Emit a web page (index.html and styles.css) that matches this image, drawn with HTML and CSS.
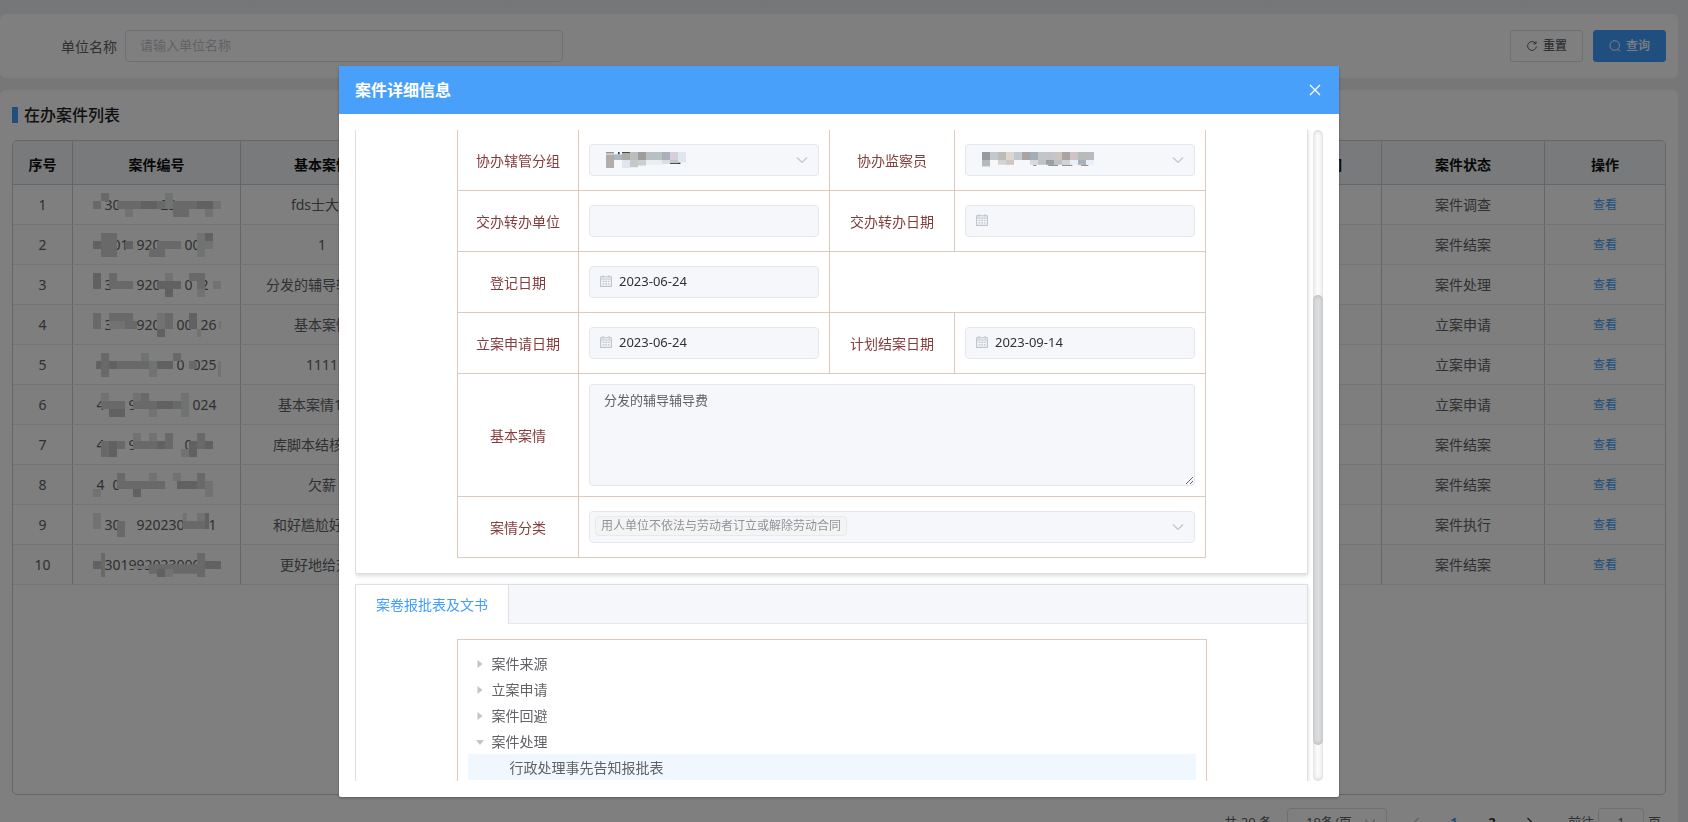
FILE: index.html
```html
<!DOCTYPE html>
<html lang="zh-CN">
<head>
<meta charset="utf-8">
<title>在办案件列表</title>
<link rel="stylesheet" href="styles.css">
</head>
<body>
<svg class="defs" aria-hidden="true">
  <symbol id="chevron" viewBox="0 0 12 12"><path d="M1 3.5l5 5 5-5" fill="none" stroke="currentColor" stroke-width="1.2"/></symbol>
  <symbol id="calendar" viewBox="0 0 12 12"><path d="M.6 1.8h10.8v9.6H.6z M.6 4h10.8" fill="none" stroke="currentColor" stroke-width="1.1"/><path d="M3 0v2.6M9 0v2.6" stroke="currentColor"/><path d="M2.6 6.4h7M2.6 8.9h7" fill="none" stroke="currentColor" stroke-width="1.2" stroke-dasharray="1.8 .8"/></symbol>
  <symbol id="caret" viewBox="0 0 12 12"><path d="M3.5 2v8l5-4z" fill="currentColor"/></symbol>
  <symbol id="caret-open" viewBox="0 0 12 12"><path d="M2 4h8l-4 5z" fill="currentColor"/></symbol>
</svg>

<main class="page">
  <form class="card search">
    <label class="search-label" for="unit">单位名称</label>
    <input class="search-input" id="unit" type="text" placeholder="请输入单位名称">
    <div class="search-actions">
      <button class="btn" type="reset"><svg viewBox="0 0 12 12" class="icon"><path d="M9.6 3.4A4.4 4.4 0 1 0 10.4 6.4M10 1.2v2.6H7.4" fill="none" stroke="currentColor"/></svg>重置</button>
      <button class="btn primary" type="button"><svg viewBox="0 0 12 12" class="icon"><circle cx="5.7" cy="5.5" r="4.8" fill="none" stroke="currentColor"/><path d="M8.9 9.1l2.3 2.3" stroke="currentColor"/></svg>查询</button>
    </div>
  </form>

  <section class="card list">
    <h2 class="list-title">在办案件列表</h2>
    <div class="table-box">
      <table class="cases">
        <colgroup><col class="c-no"><col class="c-code"><col><col><col><col><col><col><col><col><col class="c-op"></colgroup>
        <thead><tr><th>序号</th><th>案件编号</th><th>基本案情</th><th></th><th></th><th></th><th></th><th></th><th>立案申请时间</th><th>案件状态</th><th>操作</th></tr></thead>
        <tbody>
          <tr><td>1</td><td><span class="code">&#8199;30&#8199;&#8199;&#8199;&#8199;&#8199;23&#8199;&#8199;&#8199;&#8199;&#8199;<svg class="mosaic" viewBox="0 0 16 3"><path class="a" d="M0 1h1v1h-1zM3 1h3v1h-3zM8 1h5v1h-5zM10 2h2v1h-2zM1 0h1v1h-1z"/><path class="b" d="M6 1h2v1h-2zM13 1h2v1h-2z"/><path class="c" d="M9 0h1v2h-1zM4 2h1v1h-1zM14 2h1v1h-1zM15 1h1v1h-1z"/></svg></span></td><td>fds士大夫</td><td></td><td></td><td></td><td></td><td></td><td></td><td>案件调查</td><td><a href="#">查看</a></td></tr>
          <tr><td>2</td><td><span class="code">&#8199;&#8199;01&#8199;920&#8199;&#8199;&#8199;00&#8199;&#8199;<svg class="mosaic" viewBox="0 0 16 3"><path class="a" d="M1 0h2v3h-2zM7 2h2v1h-2zM8 1h3v1h-3z"/><path class="b" d="M0 1h1v1h-1zM4 1h1v1h-1zM14 0h1v1h-1z"/><path class="c" d="M13 0h1v3h-1zM14 1h1v1h-1z"/></svg></span></td><td>1</td><td></td><td></td><td></td><td></td><td></td><td></td><td>案件结案</td><td><a href="#">查看</a></td></tr>
          <tr><td>3</td><td><span class="code">&#8199;3&#8199;&#8199;&#8199;920&#8199;&#8199;&#8199;0&#8199;2&#8199;<svg class="mosaic" viewBox="0 0 16 3"><path class="a" d="M2 0h1v2h-1zM3 1h2v1h-2zM12 0h2v1h-2zM13 1h1v1h-1z"/><path class="b" d="M0 0h1v2h-1zM8 1h3v1h-3zM9 2h1v1h-1z"/><path class="c" d="M13 2h1v1h-1zM15 1h1v1h-1zM9 0h1v1h-1z"/></svg></span></td><td>分发的辅导辅导费</td><td></td><td></td><td></td><td></td><td></td><td></td><td>案件处理</td><td><a href="#">查看</a></td></tr>
          <tr><td>4</td><td><span class="code">&#8199;3&#8199;&#8199;&#8199;920&#8199;&#8199;00&#8199;26<svg class="mosaic" viewBox="0 0 16 3"><path class="a" d="M0 0h1v2h-1zM2 0h3v1h-3zM4 1h1.5v1h-1.5zM9 0h1v2h-1z"/><path class="b" d="M8 2h1v1h-1zM12 0h1v2h-1z"/><path class="c" d="M2 1h2v1h-2zM8 0h1v2h-1zM13 2h.5v1h-.5zM15.7 1h.3v1h-.3z"/></svg></span></td><td>基本案情</td><td></td><td></td><td></td><td></td><td></td><td></td><td>立案申请</td><td><a href="#">查看</a></td></tr>
          <tr><td>5</td><td><span class="code">4&#8199;&#8199;&#8199;&#8199;&#8199;&#8199;&#8199;&#8199;&#8199;0&#8199;025<svg class="mosaic" viewBox="0 0 16 3"><path class="a" d="M3 1h4v1h-4zM1 0h1v3h-1zM10 0h1v1h-1zM12 1h1v1h-1z"/><path class="b" d="M.4 1h.6v1h-.6zM2 1h1v1h-1zM8 1h2v1h-2z"/><path class="c" d="M7 1h1v2h-1zM6 0h1v1h-1zM15.6 1h.4v2h-.4z"/></svg></span></td><td>1111</td><td></td><td></td><td></td><td></td><td></td><td></td><td>立案申请</td><td><a href="#">查看</a></td></tr>
          <tr><td>6</td><td><span class="code">4&#8199;&#8199;&#8199;9&#8199;&#8199;&#8199;&#8199;&#8199;&#8199;&#8199;024<svg class="mosaic" viewBox="0 0 16 3"><path class="a" d="M1 1h3v1h-3zM5 1h7v1h-7zM6 0h1v1h-1z"/><path class="b" d="M2 2h2v1h-2zM8 1h2v1h-2z"/><path class="c" d="M1 0h1v1h-1zM5 0h1v1h-1zM7 2h1v1h-1zM11 0h1v3h-1z"/></svg></span></td><td>基本案情1111</td><td></td><td></td><td></td><td></td><td></td><td></td><td>立案申请</td><td><a href="#">查看</a></td></tr>
          <tr><td>7</td><td><span class="code">4&#8199;&#8199;&#8199;9&#8199;&#8199;&#8199;&#8199;&#8199;&#8199;0&#8199;&#8199;&#8199;<svg class="mosaic" viewBox="0 0 16 3"><path class="a" d="M1 1h1v2h-1zM3 1h1v1h-1zM5 1h4v1h-4zM9 0h1v2h-1zM13 0h1v2h-1z"/><path class="b" d="M2 1h1v2h-1zM12 1h1v2h-1zM8 1h1v1h-1zM14 1h1v1h-1z"/><path class="c" d="M5 0h1v1h-1zM7 0h1v1h-1zM11 2h1v1h-1z"/></svg></span></td><td>库脚本结核杆菌</td><td></td><td></td><td></td><td></td><td></td><td></td><td>案件结案</td><td><a href="#">查看</a></td></tr>
          <tr><td>8</td><td><span class="code">4&#8199;0&#8199;&#8199;&#8199;&#8199;&#8199;&#8199;&#8199;&#8199;&#8199;&#8199;&#8199;&#8199;<svg class="mosaic" viewBox="0 0 16 3"><path class="a" d="M3 0h1v2h-1zM4 1h2v1h-2zM6 1h3v1h-3zM13 0h1v2h-1z"/><path class="b" d="M5 2h1v1h-1zM10.5 1h2.5v1h-2.5z"/><path class="c" d="M0 2h1v1h-1zM7 0h1v1h-1zM10 0h1v1h-1zM14 1h1v2h-1z"/></svg></span></td><td>欠薪</td><td></td><td></td><td></td><td></td><td></td><td></td><td>案件结案</td><td><a href="#">查看</a></td></tr>
          <tr><td>9</td><td><span class="code">&#8199;30&#8199;&#8199;920230&#8199;&#8199;&#8199;1<svg class="mosaic" viewBox="0 0 16 3"><path class="a" d="M11.2 1h2.8v1h-2.8zM3 1h1v2h-1z"/><path class="b" d="M14 0h.5v2h-.5z"/><path class="c" d="M0 0h1v2h-1zM13 0h1v1h-1zM11.2 0h.5v1h-.5z"/></svg></span></td><td>和好尴尬好尴尬</td><td></td><td></td><td></td><td></td><td></td><td></td><td>案件执行</td><td><a href="#">查看</a></td></tr>
          <tr><td>10</td><td><span class="code">&#8199;301992023000&#8199;&#8199;<svg class="mosaic" viewBox="0 0 16 3"><path class="a" d="M1 0h.5v3h-.5zM7 1.4h6v1.2h-6zM13 0h1v3h-1z"/><path class="b" d="M0 1h1v1h-1zM14 1h2v1h-2zM8 2h1v1h-1z"/><path class="c" d="M5 1.6h2v.4h-2zM9 2h1v1h-1z"/></svg></span></td><td>更好地给对方</td><td></td><td></td><td></td><td></td><td></td><td></td><td>案件结案</td><td><a href="#">查看</a></td></tr>
        </tbody>
      </table>
    </div>
    <nav class="pager" aria-label="分页">
      <span class="pager-total">共 20 条</span>
      <span class="control pager-size"><select aria-label="每页条数"><option>10条/页</option></select><svg class="arrow"><use href="#chevron"/></svg></span>
      <div class="pager-nav">
        <button type="button" aria-label="上一页" disabled><svg class="prev"><use href="#chevron"/></svg></button>
        <button type="button" class="current">1</button>
        <button type="button">2</button>
        <button type="button" aria-label="下一页"><svg class="next"><use href="#chevron"/></svg></button>
      </div>
      <label class="pager-jump">前往<input type="text" value="1">页</label>
    </nav>
  </section>
</main>

<div class="overlay">
  <section class="dialog" role="dialog" aria-labelledby="dialog-title">
    <header class="dialog-head">
      <h1 id="dialog-title">案件详细信息</h1>
      <button type="button" class="close" aria-label="关闭"><svg viewBox="0 0 12 12"><path d="M1 1l10 10M11 1L1 11" stroke="currentColor" stroke-width="1.3"/></svg></button>
    </header>
    <div class="dialog-body">
      <div class="scroll-view">
        <div class="panel detail">
          <table class="form-table">
            <colgroup><col class="f-label-1"><col class="f-field-1"><col class="f-label-2"><col></colgroup>
            <tr>
              <th><label for="group">协办辖管分组</label></th>
              <td><div class="control"><select id="group" disabled><option></option></select>
                <svg class="redacted" width="80" height="16" viewBox="0 0 10 2"><path fill="#333" d="M-.1.05h1.1v.1h-1.1zM1.5 0h.2v.3h-.2zM2 0h1v.2H2zM8 1.3h1.3v.2H8z"/><path fill="#b1adad" d="M0 .3h1v1.7H0z"/><path fill="#aeb6c0" d="M1 .3h1V1H1z"/><path fill="#abaca8" d="M2 .1h1V1H2z"/><path fill="#b9bdbf" d="M3 0h1v1H3z"/><path fill="#a09c9c" d="M4 0h1v1H4z"/><path fill="#b7c1c4" d="M5 0h2v1H5z"/><path fill="#a9b0bb" d="M7 0h1v1H7z"/><path fill="#d8cddb" d="M8 0h1v1H8z"/><path fill="#dfe6ee" d="M9 0h1v1.3H9z"/><path fill="#e2e5ee" d="M2 1h1v1H2z"/><path fill="#c5c9c8" d="M3 1h1v.9H3z"/><path fill="#cdced0" d="M4 1h1v.7H4z"/><path fill="#e9eef0" d="M5 1h2v.6H5z"/><path fill="#dcdde0" d="M7 1h1v.5H7z"/><path fill="#c3c5cf" d="M8 1h1v.4H8z"/></svg>
                <svg class="arrow"><use href="#chevron"/></svg></div></td>
              <th><label for="inspector">协办监察员</label></th>
              <td><div class="control"><select id="inspector" disabled><option></option></select>
                <svg class="redacted" width="112" height="16" viewBox="0 0 14 2"><path fill="#333" d="M6.4 1.6h.4v.1h-.4zM8.3 1.6h1.2v.1H8.3zM10 1.6h1.3v.1H10zM12.4 1.6h.9v.1h-.9z"/><path fill="#959b9d" d="M0 0h1v1H0z"/><path fill="#c3c7d0" d="M1 0h1v1H1zM4 0h1v1H4z"/><path fill="#bcbdb9" d="M2 0h1v1H2z"/><path fill="#dbd6ce" d="M3 0h1v1H3z"/><path fill="#aaa3a4" d="M5 0h1v1H5zM10 0h1v1h-1z"/><path fill="#a2adb6" d="M6 0h1v1H6z"/><path fill="#c3c6c8" d="M7 0h2v1H7z"/><path fill="#cbc4c1" d="M9 0h1v1H9z"/><path fill="#cfc2c8" d="M11 0h1v1h-1z"/><path fill="#b6bcb8" d="M12 0h1v1h-1z"/><path fill="#bab9c0" d="M13 0h1v1h-1z"/><path fill="#b4b9bb" d="M0 1h1v.8H0z"/><path fill="#d3d3d5" d="M2 1h1v.6H2zM10 1h1v.6h-1z"/><path fill="#cfc5c4" d="M3 1h1v.6H3z"/><path fill="#d7d9de" d="M6 1h1v.6H6z"/><path fill="#bfc1c3" d="M7 1h1v.6H7zM9 1h1v.6H9z"/><path fill="#9a9fa1" d="M8 1h1v.6H8z"/><path fill="#e9eff8" d="M11 1h1v.6h-1zM13 1h1v.6h-1z"/><path fill="#a9b2b4" d="M12 1h1v.6h-1z"/></svg>
                <svg class="arrow"><use href="#chevron"/></svg></div></td>
            </tr>
            <tr>
              <th><label for="to-unit">交办转办单位</label></th>
              <td><div class="control"><input id="to-unit" type="text" disabled></div></td>
              <th><label for="to-date">交办转办日期</label></th>
              <td><div class="control date"><svg class="cal"><use href="#calendar"/></svg><input id="to-date" type="text" disabled></div></td>
            </tr>
            <tr>
              <th><label for="reg-date">登记日期</label></th>
              <td><div class="control date"><svg class="cal"><use href="#calendar"/></svg><input id="reg-date" type="text" value="2023-06-24" disabled></div></td>
              <td colspan="2"></td>
            </tr>
            <tr>
              <th><label for="apply-date">立案申请日期</label></th>
              <td><div class="control date"><svg class="cal"><use href="#calendar"/></svg><input id="apply-date" type="text" value="2023-06-24" disabled></div></td>
              <th><label for="plan-date">计划结案日期</label></th>
              <td><div class="control date"><svg class="cal"><use href="#calendar"/></svg><input id="plan-date" type="text" value="2023-09-14" disabled></div></td>
            </tr>
            <tr class="tall">
              <th><label for="facts">基本案情</label></th>
              <td colspan="3"><textarea id="facts" disabled>分发的辅导辅导费</textarea></td>
            </tr>
            <tr>
              <th><label for="kind">案情分类</label></th>
              <td colspan="3"><div class="control"><select id="kind" disabled><option></option></select><span class="tag">用人单位不依法与劳动者订立或解除劳动合同</span><svg class="arrow"><use href="#chevron"/></svg></div></td>
            </tr>
          </table>
        </div>

        <div class="panel docs">
          <div class="tabs" role="tablist"><button type="button" class="tab" role="tab" aria-selected="true">案卷报批表及文书</button></div>
          <ul class="tree" role="tree">
            <li role="treeitem"><svg><use href="#caret"/></svg>案件来源</li>
            <li role="treeitem"><svg><use href="#caret"/></svg>立案申请</li>
            <li role="treeitem"><svg><use href="#caret"/></svg>案件回避</li>
            <li role="treeitem" aria-expanded="true"><svg><use href="#caret-open"/></svg>案件处理</li>
            <li role="treeitem" class="child selected">行政处理事先告知报批表</li>
          </ul>
        </div>
      </div>
      <div class="track"><div class="thumb"></div></div>
    </div>
  </section>
</div>
</body>
</html>
```
FILE: styles.css
```css
* { box-sizing: border-box; }

body {
  margin: 0;
  height: 100vh;
  overflow: hidden;
  padding: 14px 10px 0 0;
  background: linear-gradient(#e9eff2, #eeeff2 14px, #ebeef2);
  color: #606266;
  font: 14px/20px "Noto Sans", "Noto Sans CJK SC", sans-serif;
}

input, select, textarea, button { font: inherit; color: inherit; }
button { cursor: pointer; }
a { color: #409eff; text-decoration: none; font-size: 12px; }
.defs { display: none; }

.page { display: flex; flex-direction: column; gap: 12px; background: #efefef; }
.card { background: #fff; border-radius: 6px; }

/* search bar */
.search { display: flex; align-items: center; height: 64px; padding: 0 12px 0 61px; }
.search-label { width: 64px; padding-top: 2px; }
.search-input {
  width: 438px;
  height: 32px;
  padding: 0 14px 2px;
  border: 1px solid #dcdfe6;
  border-radius: 4px;
  font-size: 13px;
}
.search-input::placeholder { color: #c0c4cc; }
.search-actions { display: flex; gap: 10px; margin-left: auto; }
.btn {
  display: flex;
  align-items: center;
  justify-content: center;
  gap: 5px;
  width: 73px;
  height: 32px;
  border: 1px solid #dcdfe6;
  border-radius: 3px;
  background: #fff;
  font-size: 12px;
  font-weight: 500;
}
.btn.primary { background: #409eff; border-color: #409eff; color: #fff; }
.icon { width: 12px; height: 12px; }

/* case list */
.list { padding: 15px 12px 0; }
.list-title {
  display: flex;
  align-items: center;
  gap: 6px;
  margin: 0 0 15px;
  font-size: 16px;
  line-height: 20px;
  font-weight: 500;
  color: #222;
}
.list-title::before { content: ""; width: 6px; height: 16px; background: #409eff; }
.table-box {
  height: calc(100vh - 167px);
  border: 1px solid #ccc;
  border-radius: 5px;
  overflow: hidden;
}
.cases { width: 100%; table-layout: fixed; border-collapse: separate; border-spacing: 0; text-align: center; }
.c-no { width: 60px; }
.c-code { width: 168px; }
.c-op { width: 120px; }
.cases th, .cases td {
  height: 40px;
  padding: 0;
  border-right: 1px solid #ccc;
  border-bottom: 1px solid #e8e8e8;
  white-space: nowrap;
}
.cases th { height: 44px; padding-top: 4px; background: #f2f4f6; border-bottom-color: #ccc; color: #111; font-weight: 700; }
.cases th:last-child, .cases td:last-child { border-right: 0; }
.cases tbody tr:nth-child(even) { background: #fcfcfc; }
.code { position: relative; display: inline-block; white-space: pre; }
.mosaic { position: absolute; left: -3px; top: -2px; width: 128px; height: 24px; }
.mosaic .a { fill: #d2d2d2; }
.mosaic .b { fill: #c2c2c4; }
.mosaic .c { fill: #e2e4e4; }

/* pager */
.pager { display: flex; align-items: center; justify-content: flex-end; height: 28px; margin: 13px 5px 0 0; font-size: 13px; }
.pager-size { width: 100px; margin: 0 10px 0 15px; }
.pager .pager-size select { height: 28px; padding-left: 18px; background: #fff; border-color: #dcdfe6; color: #606266; }
.pager-nav { display: flex; margin-right: 19px; }
.pager-nav button { width: 38px; height: 28px; padding: 0; border: 0; background: none; font-weight: 700; color: #303133; }
.pager-nav .current { color: #409eff; }
.pager-nav svg { width: 12px; height: 12px; vertical-align: -2px; }
.pager-nav :disabled { color: #c0c4cc; }
.prev { transform: rotate(90deg); }
.next { transform: rotate(-90deg); }
.pager-jump { display: flex; align-items: center; gap: 4px; }
.pager-jump input { width: 46px; height: 28px; border: 1px solid #dcdfe6; border-radius: 4px; text-align: center; }

/* dialog */
.overlay {
  position: fixed;
  inset: 0;
  display: flex;
  justify-content: center;
  padding: 66px 10px 25px 0;
  background: rgba(0, 0, 0, .5);
}
.dialog {
  display: flex;
  flex-direction: column;
  width: 1000px;
  max-width: 100%;
  background: #fff;
  border-radius: 2px;
  box-shadow: 0 1px 3px rgba(0, 0, 0, .3);
}
.dialog-head {
  display: flex;
  align-items: center;
  justify-content: space-between;
  height: 48px;
  padding: 0 16px;
  background: #48a0fb;
  color: #fff;
}
.dialog-head h1 { margin: 0; font-size: 16px; line-height: 24px; font-weight: 700; }
.close { display: flex; padding: 2px; border: 0; background: none; }
.close svg { width: 12px; height: 12px; }
.dialog-body { flex: 1; min-height: 0; display: flex; padding: 16px; }
.scroll-view { flex: 1; overflow: hidden; padding-right: 5px; }
.track {
  width: 10px;
  padding-top: 165px;
  border-radius: 5px;
  background: #fcfcfc;
  box-shadow: inset 0 0 5px rgba(0, 0, 0, .2);
}
.thumb { height: 450px; border-radius: 5px; background: #dcdee0; box-shadow: inset 0 0 5px rgba(0, 0, 0, .2); }

.panel {
  border: 1px solid #dcdfe6;
  background: #fff;
  box-shadow: 0 2px 4px rgba(0, 0, 0, .12), 0 0 6px rgba(0, 0, 0, .04);
}
.detail { padding-bottom: 15px; border-top: 0; }
.docs { margin-top: 10px; }

.form-table { width: 749px; max-width: 100%; margin: 0 auto; table-layout: fixed; border-collapse: collapse; }
.f-label-1 { width: 121px; }
.f-field-1 { width: 251px; }
.f-label-2 { width: 125px; }
.form-table th, .form-table td { height: 61px; padding: 0 10px; border: 1px solid #dec9bb; }
.form-table th { padding: 2px 0 0; font-weight: 400; color: #843c3c; }
.form-table tr:first-child > * { height: 60px; border-top: 0; }
.form-table .tall > * { height: 123px; }

.control { position: relative; display: block; }
.control select, .control input, textarea {
  display: block;
  width: 100%;
  height: 32px;
  margin: 0;
  padding: 0 15px;
  border: 1px solid #e4e7ed;
  border-radius: 4px;
  background: #f5f7fa;
  color: #303133;
  font-size: 13px;
  opacity: 1;
}
.control select { appearance: none; }
.control.date input { padding: 0 15px 2px 29px; }
.arrow { position: absolute; right: 11px; top: 50%; width: 12px; height: 12px; margin-top: -6px; color: #c0c4cc; pointer-events: none; }
.cal { position: absolute; left: 11px; top: 9px; width: 12px; height: 12px; color: #c0c4cc; }
.redacted { position: absolute; left: 17px; top: 8px; }
.tag {
  position: absolute;
  left: 6px;
  top: 5px;
  height: 20px;
  padding: 0 5px;
  border: 1px solid #e9e9eb;
  border-radius: 4px;
  background: #f4f4f5;
  color: #909399;
  font-size: 12px;
  line-height: 18px;
  white-space: nowrap;
}
textarea { height: 102px; padding: 5px 14px; line-height: 20px; color: #606266; resize: vertical; }

.tabs { display: flex; height: 39px; background: #f5f7fa; border-bottom: 1px solid #e4e7ed; }
.tab { height: 39px; padding: 2px 20px 0; border: 0; border-right: 1px solid #dcdfe6; background: #fff; color: #409eff; }
.tree { width: 750px; max-width: 100%; margin: 15px auto 0; padding: 10px 10px 40px; border: 1px solid #dec9bb; list-style: none; }
.tree li { display: flex; align-items: center; gap: 6px; height: 26px; padding: 2px 0 0 6px; }
.tree svg { width: 12px; height: 12px; color: #c0c4cc; }
.tree .child { padding-left: 42px; }
.tree .selected { background: #f0f7ff; }
```
